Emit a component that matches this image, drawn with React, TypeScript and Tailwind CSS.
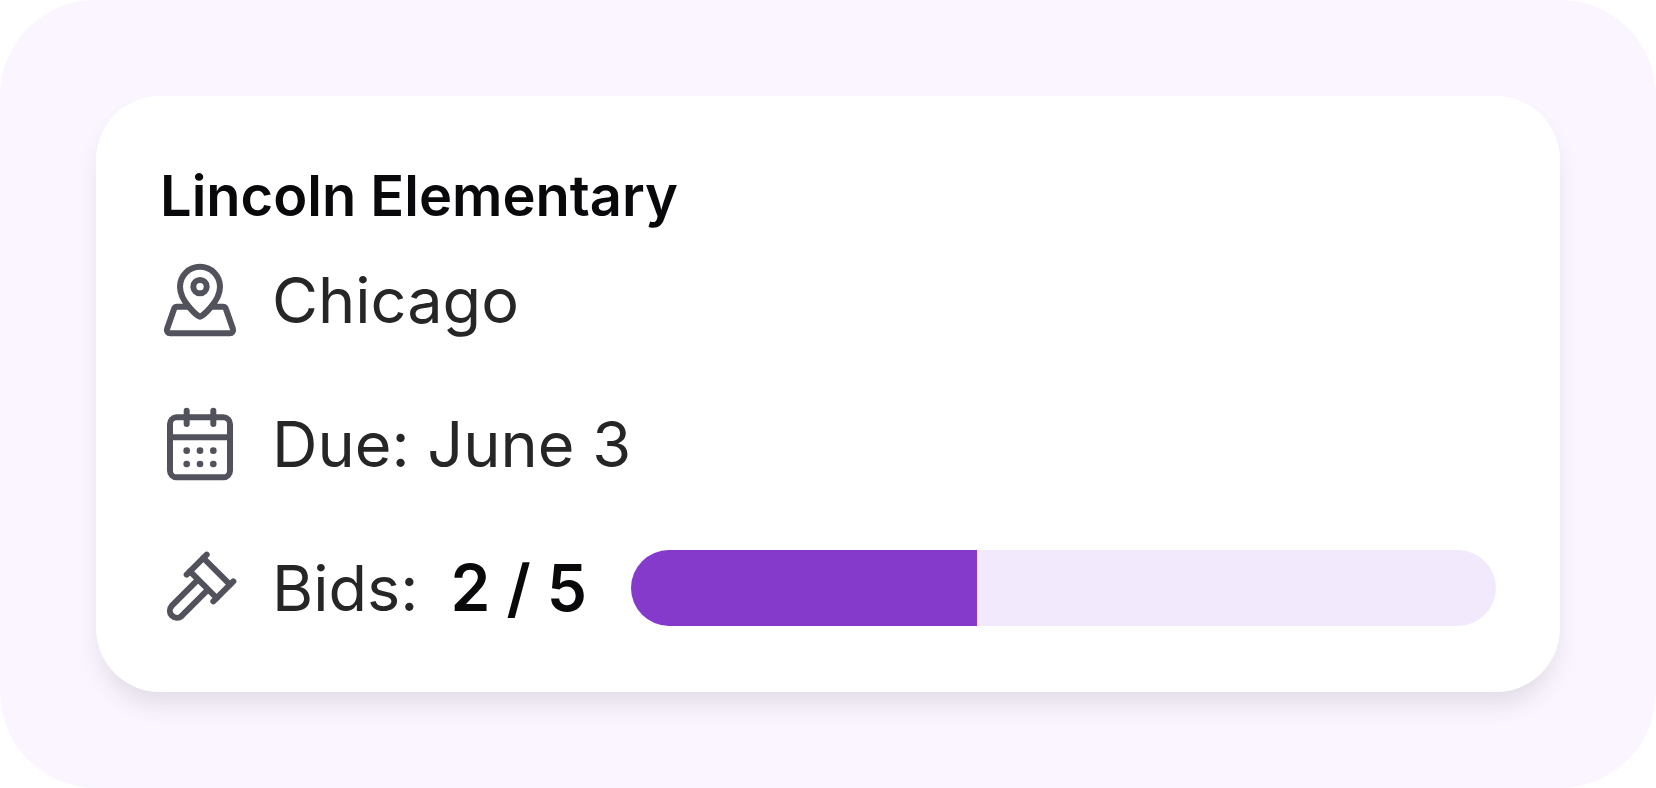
import React from 'react';

const MapPinIcon: React.FC = () => (
  <svg
    className="size-20 shrink-0 text-zinc-600"
    viewBox="0 0 20 20"
    fill="none"
    stroke="currentColor"
    strokeWidth="1.5"
    strokeLinecap="round"
    strokeLinejoin="round"
    aria-hidden="true"
  >
    <circle cx="10" cy="6.67" r="1.67" />
    <path d="M10 14.17C10.5 14.17 15 10.4 15 6.67a5 5 0 0 0-10 0C5 10.4 9.5 14.17 10 14.17Z" />
    <path d="M13.1 11.67h2.6c.36 0 .68.23.79.57l1.75 5c.18.54-.22 1.09-.79 1.09H2.55c-.57 0-.97-.55-.79-1.09l1.75-5c.11-.34.43-.57.79-.57h2.6" />
  </svg>
);

const CalendarIcon: React.FC = () => (
  <svg
    className="size-20 shrink-0 text-zinc-600"
    viewBox="0 0 20 20"
    fill="none"
    stroke="currentColor"
    strokeWidth="1.5"
    strokeLinecap="round"
    aria-hidden="true"
  >
    <rect x="2.5" y="3.33" width="15" height="15" rx="1.67" />
    <path d="M6.67 1.67V5M13.33 1.67V5M2.5 8.33h15" />
    <g fill="currentColor" stroke="none">
      <circle cx="6.67" cy="11.67" r=".83" />
      <circle cx="10" cy="11.67" r=".83" />
      <circle cx="13.33" cy="11.67" r=".83" />
      <circle cx="6.67" cy="15" r=".83" />
      <circle cx="10" cy="15" r=".83" />
      <circle cx="13.33" cy="15" r=".83" />
    </g>
  </svg>
);

const GavelIcon: React.FC = () => (
  <svg
    className="size-20 shrink-0 text-zinc-600"
    viewBox="0 0 20 20"
    fill="none"
    stroke="currentColor"
    strokeWidth="1.5"
    strokeLinecap="round"
    strokeLinejoin="round"
    aria-hidden="true"
  >
    <path d="M6.67 6.67l5-5M13.33 13.33l5-5" />
    <path d="M10.83 2.5l6.67 6.67M7.5 5.83l6.67 6.67" />
    <path d="M9.3 8.1l-6.38 6.38a1.77 1.77 0 0 0 2.5 2.5l6.38-6.38" />
  </svg>
);

const App: React.FC = () => {
  const bids = 2;
  const bidsNeeded = 5;

  return (
    <main className="rounded-[96px] bg-purple-50 p-24 font-['Inter',sans-serif]">
      <article className="rounded-[64px] bg-white p-16 shadow-[0_16px_24px_-4px_rgba(0,0,0,0.1)]">
        <h2 className="mb-7 text-[56px] leading-[72px] font-semibold text-zinc-950">
          Lincoln Elementary
        </h2>

        <ul className="space-y-16 text-[63px] leading-[80px] text-neutral-800">
          <li className="flex items-center gap-8">
            <MapPinIcon />
            <span>Chicago</span>
          </li>
          <li className="flex items-center gap-8">
            <CalendarIcon />
            <span>Due: June 3</span>
          </li>
          <li className="flex items-center gap-8">
            <GavelIcon />
            <span id="bids-label">Bids:</span>
            <span className="text-[64px] font-semibold text-zinc-950">
              {bids} / {bidsNeeded}
            </span>
            {/* Bids progress */}
            <div
              className="ml-3 h-19 flex-1 overflow-hidden rounded-full bg-[#f3e9fd]"
              role="progressbar"
              aria-labelledby="bids-label"
              aria-valuenow={bids}
              aria-valuemin={0}
              aria-valuemax={bidsNeeded}
            >
              <div
                className="h-full bg-[#853acb]"
                style={{ width: `${(bids / bidsNeeded) * 100}%` }}
              />
            </div>
          </li>
        </ul>
      </article>
    </main>
  );
};

export default App;
